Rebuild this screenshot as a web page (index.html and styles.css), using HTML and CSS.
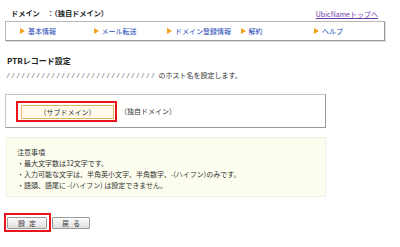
FILE: index.html
```html
<!DOCTYPE html>
<html lang="ja">

<head>
  <meta charset="UTF-8">
  <title>PTRレコード設定</title>
  <link rel="stylesheet" href="styles.css">
</head>

<body>
  <div class="page">
    <div class="head">
      <h1>ドメイン　：（独自ドメイン）</h1>
      <a class="top-link" href="#">UbicNameトップへ</a>
    </div>

    <ul class="menu">
      <li><a href="#">基本情報</a></li>
      <li><a href="#">メール転送</a></li>
      <li><a href="#">ドメイン登録情報</a></li>
      <li><a href="#">解約</a></li>
      <li><a href="#">ヘルプ</a></li>
    </ul>

    <h2>PTRレコード設定</h2>
    <p class="host"><span class="slashes">//////////////////////////////</span> のホスト名を設定します。</p>

    <div class="form-box">
      <span class="mark mark-input"><input type="text" value="（サブドメイン）"></span>
      <span class="suffix">（独自ドメイン）</span>
    </div>

    <div class="notes">
      <p>注意事項</p>
      <p>・最大文字数は32文字です。</p>
      <p>・入力可能な文字は、半角英小文字、半角数字、-(ハイフン)のみです。</p>
      <p>・語頭、語尾に -(ハイフン) は設定できません。</p>
    </div>

    <div class="buttons">
      <span class="mark mark-btn"><button type="button">設定</button></span>
      <button type="button" class="back">戻る</button>
    </div>
  </div>
</body>

</html>
```

FILE: styles.css
```css
* {
  padding: 0;
  margin: 0;
  box-sizing: border-box;
}

body {
  font-family: "Noto Sans CJK JP", "Noto Sans", sans-serif;
  font-size: 7px;
  color: #333333;
  background: #ffffff;
}

.page {
  padding: 7px 0 0 5px;
}

.head {
  width: 373px;
  height: 13px;
  padding-left: 6px;
  display: flex;
  justify-content: space-between;
  align-items: center;
}

.head h1 {
  font-size: 7.2px;
  font-weight: 700;
  color: #222222;
  line-height: 13px;
}

.top-link {
  color: #6a3aa8;
  font-size: 7px;
  text-decoration: underline;
}

/* メニュー */
.menu {
  list-style: none;
  margin-top: 1px;
  width: 380px;
  height: 20px;
  border: 1px solid #b8b8b8;
  border-right-color: #999999;
  border-bottom-color: #999999;
  box-shadow: 1px 1px 0 #dddddd;
  padding-left: 14px;
  display: grid;
  grid-template-columns: repeat(5, 73.5px);
  align-items: center;
}

.menu li {
  display: flex;
  align-items: center;
  column-gap: 3px;
}

.menu li::before {
  content: "";
  width: 0;
  height: 0;
  border-left: 5px solid #f3a01c;
  border-top: 3.5px solid transparent;
  border-bottom: 3.5px solid transparent;
}

.menu a {
  color: #1c48b8;
  text-decoration: none;
  font-size: 7px;
}

h2 {
  margin-top: 14px;
  padding-left: 2px;
  font-size: 8px;
  font-weight: 700;
  line-height: 12px;
  color: #222222;
}

.host {
  margin-top: 2px;
  padding-left: 2px;
  line-height: 12px;
}

.slashes {
  font-family: "Liberation Sans", sans-serif;
  font-style: italic;
  letter-spacing: 3.05px;
  color: #555555;
}

/* 入力欄 */
.form-box {
  margin-top: 12px;
  width: 321px;
  height: 34px;
  border: 1px solid #c4c4c4;
  border-right-color: #999999;
  border-bottom-color: #999999;
  padding-left: 10px;
  display: flex;
  align-items: center;
  column-gap: 3px;
}

.mark {
  display: inline-flex;
  border: 2px solid #e8141c;
}

.mark-input {
  padding: 2px 1px 1px 3px;
}

.mark-input input {
  width: 93px;
  height: 14px;
  border: 1px solid #e0b464;
  background: #fffbea;
  font-family: inherit;
  font-size: 7px;
  color: #333333;
  text-align: center;
  outline: none;
}

/* 注意事項 */
.notes {
  margin: 9px 0 0 1px;
  width: 320px;
  height: 60px;
  background: #fcfdee;
  border: 1px solid #efefe4;
  padding: 9px 0 0 10px;
}

.notes p {
  line-height: 11px;
}

/* ボタン */
.buttons {
  margin: 16px 0 0 -1px;
  display: flex;
  align-items: flex-start;
  column-gap: 1px;
}

.mark-btn {
  padding: 2px 2px 1px 1px;
}

.buttons button {
  width: 40px;
  height: 12px;
  border: 1px solid #9a9a9a;
  border-radius: 1px;
  background: linear-gradient(#fdfdfd, #dedede);
  font-family: inherit;
  font-size: 7px;
  color: #333333;
  line-height: 10px;
  letter-spacing: 4px;
  text-indent: 4px;
}

.buttons .back {
  width: 38px;
  margin-top: 4px;
}
```
